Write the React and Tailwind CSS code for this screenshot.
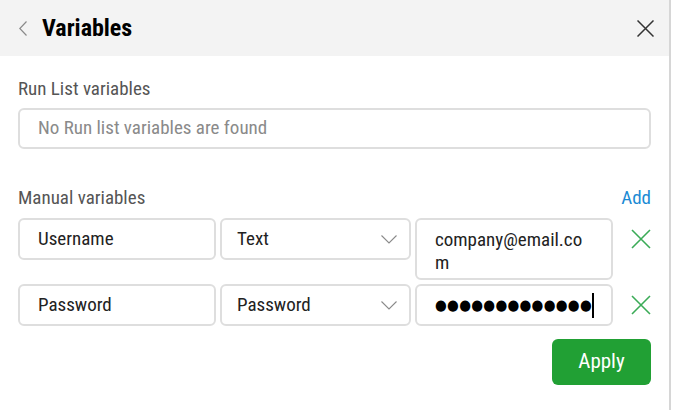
const font = { fontFamily: "Roboto, 'Liberation Sans', sans-serif", fontStretch: "87.5%" };

function Box({ children, className = "" }) {
  return (
    <div
      className={`flex items-center rounded-md border-2 border-[#dedede] bg-white pr-[12px] text-[19px] text-[#222] ${className}`}
    >
      {children}
    </div>
  );
}

function Row({ name, type, value, tall, focused }) {
  return (
    <div className="grid grid-cols-[198px_191px_198px_1fr] gap-x-[4px] items-start">
      <Box className="h-[42px] pl-[18px]">{name}</Box>
      <Box className="h-[42px] justify-between pl-[15px]">
        <span>{type}</span>
        <svg width="16" height="9" viewBox="0 0 16 9" className="text-[#8a8a8a]">
          <polyline points="0.5,0.5 8,8 15.5,0.5" fill="none" stroke="currentColor" strokeWidth="1.1" />
        </svg>
      </Box>
      <Box
        className={`pl-[18px] ${tall ? "h-[62px] items-start pt-[8px] leading-[23px]" : "h-[42px]"} ${
          focused ? "border-[#c4c4c4]" : ""
        }`}
      >
        {value}
      </Box>
      <div className="flex h-[42px] items-center justify-end">
        <svg width="20" height="20" viewBox="0 0 20 20" className="text-[#3bab57]">
          <path d="M1 1 L19 19 M19 1 L1 19" fill="none" stroke="currentColor" strokeWidth="1.6" />
        </svg>
      </div>
    </div>
  );
}

export default function App() {
  return (
    <div style={font} className="h-[410px] w-[673px] bg-white">
      <div className="h-full w-[671px] border-r-2 border-[#d6d6d6] bg-white">
        <div className="flex h-[56px] items-center bg-[#f3f3f3] pl-[19px] pr-[15px]">
          <svg width="8" height="15" viewBox="0 0 8 15" className="text-[#8a8a8a]">
            <polyline points="7.5,0.5 0.8,7.5 7.5,14.5" fill="none" stroke="currentColor" strokeWidth="1.2" />
          </svg>
          <h1 className="ml-[15px] text-[24px] font-bold text-black">Variables</h1>
          <svg width="17" height="17" viewBox="0 0 17 17" className="ml-auto text-[#333]">
            <path d="M0.5 0.5 L16.5 16.5 M16.5 0.5 L0.5 16.5" fill="none" stroke="currentColor" strokeWidth="1.5" />
          </svg>
        </div>

        <div className="px-[18px]">
          <div className="pt-[20px] text-[19px] leading-[26px] text-[#555]">Run List variables</div>
          <div className="mt-[6px] flex h-[41px] items-center rounded-md border-2 border-[#dedede] pl-[18px] text-[19px] text-[#8a8a8a]">
            No Run list variables are found
          </div>

          <div className="mt-[36px] flex items-center justify-between text-[19px] leading-[26px]">
            <span className="text-[#555]">Manual variables</span>
            <span className="text-[#1a8ad4]">Add</span>
          </div>

          <div className="mt-[7px] flex flex-col gap-[4px]">
            <Row name="Username" type="Text" value={<span>company@email.co<br />m</span>} tall />
            <Row
              name="Password"
              type="Password"
              focused
              value={
                <span className="flex items-center">
                  <span
                    className="text-[15px] tracking-[0.3px] text-black"
                    style={{ fontFamily: "'DejaVu Sans', sans-serif" }}
                  >
                    ●●●●●●●●●●●●●
                  </span>
                  <span className="h-[25px] w-[2px] bg-black" />
                </span>
              }
            />
          </div>

          <div className="mt-[13px] flex justify-end">
            <button className="h-[46px] w-[99px] rounded-md bg-[#21a034] text-[21px] text-white">Apply</button>
          </div>
        </div>
      </div>
    </div>
  );
}
